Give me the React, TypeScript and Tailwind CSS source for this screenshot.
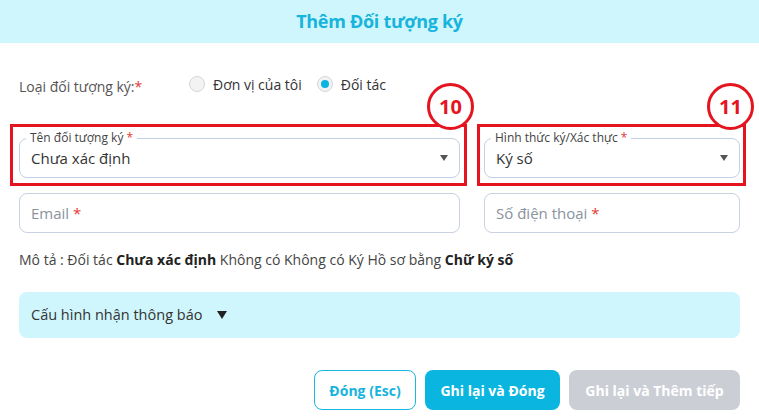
const font = { fontFamily: '"Open Sans", "Noto Sans", sans-serif' };

const Caret = () => (
  <svg width="8" height="6" viewBox="0 0 8 6" className="text-[#555]">
    <path d="M0 0 L8 0 L4 6 Z" fill="currentColor" />
  </svg>
);

interface SelectProps {
  label: string;
  value: string;
}

const OutlinedSelect = ({ label, value }: SelectProps) => (
  <div className="relative h-[40px] rounded-lg border border-[#c3d1e2] flex items-center px-[11px]">
    <span className="absolute -top-[9px] left-[6px] bg-white px-[4px] text-[12px] leading-[16px] text-[#444]">
      {label} <span className="text-[#e53935]">*</span>
    </span>
    <span className="flex-1 text-[15px] text-[#333] pt-[1px]">{value}</span>
    <Caret />
  </div>
);

const TextInput = ({ placeholder }: { placeholder: string }) => (
  <div className="h-[40px] rounded-lg border border-[#c8d2e0] flex items-center px-[11px] text-[15px] text-[#8a929c]">
    {placeholder}&nbsp;<span className="text-[#e53935]">*</span>
  </div>
);

const Radio = ({ checked, label }: { checked?: boolean; label: string }) => (
  <label className="flex items-center gap-[8px] text-[14px] text-[#333]">
    <span className="w-[16px] h-[16px] rounded-full border border-[#d6d6d6] bg-[#f3f3f3] flex items-center justify-center">
      {checked && <span className="w-[8px] h-[8px] rounded-full bg-[#0ab4e0]" />}
    </span>
    {label}
  </label>
);

const Marker = ({ n, className }: { n: string; className: string }) => (
  <div
    className={`absolute w-[47px] h-[47px] rounded-full border-[3px] border-[#e4151f] bg-white flex items-center justify-center text-[20px] font-bold text-[#e4151f] ${className}`}
  >
    {n}
  </div>
);

const App = () => {
  return (
    <div className="relative w-[759px] h-[416px] bg-white overflow-hidden" style={font}>
      <div className="h-[43px] bg-[#cff6fd] flex items-center justify-center">
        <h1 className="text-[18px] font-bold text-[#17b4dc] tracking-[-0.3px]">Thêm Đối tượng ký</h1>
      </div>

      <div className="px-[19px]">
        <div className="flex items-center h-[26px] mt-[30px]">
          <span className="w-[170px] text-[14px] text-[#555]">
            Loại đối tượng ký:<span className="text-[#e53935]">*</span>
          </span>
          <div className="flex items-center gap-[15px] -mt-[4px]">
            <Radio label="Đơn vị của tôi" />
            <Radio checked label="Đối tác" />
          </div>
        </div>

        <div className="grid grid-cols-[441px_256px] gap-x-[24px] gap-y-[15px] mt-[39px]">
          <OutlinedSelect label="Tên đối tượng ký" value="Chưa xác định" />
          <OutlinedSelect label="Hình thức ký/Xác thực" value="Ký số" />
          <TextInput placeholder="Email" />
          <TextInput placeholder="Số điện thoại" />
        </div>

        <p className="mt-[16px] text-[14px] text-[#444]">
          Mô tả : Đối tác <b className="text-[#222]">Chưa xác định</b> Không có Không có Ký Hồ sơ bằng{" "}
          <b className="text-[#222]">Chữ ký số</b>
        </p>

        <div className="mt-[22px] h-[46px] rounded-lg bg-[#cff6fd] flex items-center px-[12px] gap-[15px]">
          <span className="text-[14.5px] text-[#333]">Cấu hình nhận thông báo</span>
          <svg width="10" height="8" viewBox="0 0 10 8">
            <path d="M0 0 L10 0 L5 8 Z" fill="#222" />
          </svg>
        </div>

        <div className="mt-[32px] flex justify-end gap-[9px]">
          <button className="h-[40px] w-[102px] rounded-lg border border-[#1ab7e0] text-[14px] font-bold text-[#17b4dc]">
            Đóng (Esc)
          </button>
          <button className="h-[40px] w-[135px] rounded-lg bg-[#0ab6df] text-[14px] font-bold text-white">
            Ghi lại và Đóng
          </button>
          <button className="h-[40px] w-[171px] rounded-lg bg-[#ccced6] text-[14px] font-bold text-white">
            Ghi lại và Thêm tiếp
          </button>
        </div>
      </div>

      {/* annotation overlays */}
      <div className="absolute left-[10px] top-[124px] w-[457px] h-[62px] border-[3px] border-[#e4151f]" />
      <div className="absolute left-[477px] top-[124px] w-[269px] h-[62px] border-[3px] border-[#e4151f]" />
      <Marker n="10" className="left-[427px] top-[83px]" />
      <Marker n="11" className="left-[707px] top-[83px]" />
    </div>
  );
};

export default App;
